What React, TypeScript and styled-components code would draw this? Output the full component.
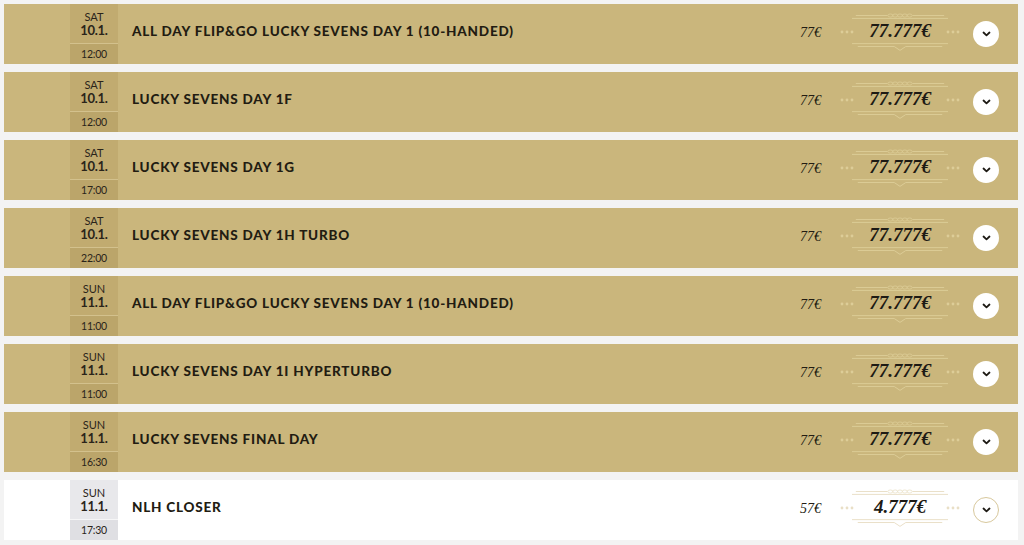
import { FC } from 'react';
import styled, { createGlobalStyle } from 'styled-components';

interface Tournament {
  day: string;
  date: string;
  time: string;
  title: string;
  buyIn: string;
  prize: string;
  featured: boolean;
}

const tournaments: Tournament[] = [
  { day: 'SAT', date: '10.1.', time: '12:00', title: 'ALL DAY FLIP&GO LUCKY SEVENS DAY 1 (10-HANDED)', buyIn: '77€', prize: '77.777€', featured: true },
  { day: 'SAT', date: '10.1.', time: '12:00', title: 'LUCKY SEVENS DAY 1F', buyIn: '77€', prize: '77.777€', featured: true },
  { day: 'SAT', date: '10.1.', time: '17:00', title: 'LUCKY SEVENS DAY 1G', buyIn: '77€', prize: '77.777€', featured: true },
  { day: 'SAT', date: '10.1.', time: '22:00', title: 'LUCKY SEVENS DAY 1H TURBO', buyIn: '77€', prize: '77.777€', featured: true },
  { day: 'SUN', date: '11.1.', time: '11:00', title: 'ALL DAY FLIP&GO LUCKY SEVENS DAY 1 (10-HANDED)', buyIn: '77€', prize: '77.777€', featured: true },
  { day: 'SUN', date: '11.1.', time: '11:00', title: 'LUCKY SEVENS DAY 1I HYPERTURBO', buyIn: '77€', prize: '77.777€', featured: true },
  { day: 'SUN', date: '11.1.', time: '16:30', title: 'LUCKY SEVENS FINAL DAY', buyIn: '77€', prize: '77.777€', featured: true },
  { day: 'SUN', date: '11.1.', time: '17:30', title: 'NLH CLOSER', buyIn: '57€', prize: '4.777€', featured: false },
];

const GlobalStyle = createGlobalStyle`
  html, body {
    margin: 0;
    padding: 0;
    background: #f3f3f3;
  }
  * {
    box-sizing: border-box;
  }
`;

const OrnamentTop: FC<{ color: string }> = ({ color }) => (
  <svg width="100" height="8" viewBox="0 0 100 8">
    <line x1="4" y1="3.5" x2="37" y2="3.5" stroke={color} strokeWidth="1" />
    <line x1="63" y1="3.5" x2="96" y2="3.5" stroke={color} strokeWidth="1" />
    <line x1="0" y1="6.5" x2="100" y2="6.5" stroke={color} strokeWidth="1" />
    {[40, 45, 50, 55, 60].map((cx) => (
      <ellipse key={cx} cx={cx} cy="3.5" rx="2.6" ry="1.6" fill="none" stroke={color} strokeWidth="0.8" />
    ))}
  </svg>
);

const OrnamentBottom: FC<{ color: string }> = ({ color }) => (
  <svg width="100" height="10" viewBox="0 0 100 10">
    <line x1="0" y1="1.5" x2="100" y2="1.5" stroke={color} strokeWidth="1" />
    <line x1="6" y1="4.5" x2="44" y2="4.5" stroke={color} strokeWidth="1" />
    <line x1="56" y1="4.5" x2="94" y2="4.5" stroke={color} strokeWidth="1" />
    <polyline points="44,4.5 50,8.5 56,4.5" fill="none" stroke={color} strokeWidth="1" />
  </svg>
);

const Dots: FC<{ color: string }> = ({ color }) => (
  <svg width="14" height="4" viewBox="0 0 14 4">
    {[2, 7, 12].map((cx) => (
      <circle key={cx} cx={cx} cy="2" r="1.4" fill={color} />
    ))}
  </svg>
);

const Chevron: FC = () => (
  <svg width="9" height="6" viewBox="0 0 9 6">
    <polyline points="1.5,1.5 4.5,4.3 7.5,1.5" fill="none" stroke="#1d1a14" strokeWidth="1.8" strokeLinecap="round" strokeLinejoin="round" />
  </svg>
);

const App: FC = () => (
  <>
    <GlobalStyle />
    <ListStyled>
      {tournaments.map((t, i) => {
        const ornament = t.featured ? '#ddcd98' : '#e9dfc6';
        return (
          <RowStyled key={i} $featured={t.featured}>
            <DateStyled $featured={t.featured}>
              <DateTopStyled $featured={t.featured}>
                <span className="day">{t.day}</span>
                <span className="date">{t.date}</span>
              </DateTopStyled>
              <TimeStyled $featured={t.featured}>{t.time}</TimeStyled>
            </DateStyled>

            <TitleStyled>{t.title}</TitleStyled>

            <BuyInStyled>{t.buyIn}</BuyInStyled>

            <PrizeStyled>
              <Dots color={ornament} />
              <PrizeFrameStyled>
                <OrnamentTop color={ornament} />
                <span className="amount">{t.prize}</span>
                <OrnamentBottom color={ornament} />
              </PrizeFrameStyled>
              <Dots color={ornament} />
            </PrizeStyled>

            <ToggleStyled $featured={t.featured}>
              <Chevron />
            </ToggleStyled>
          </RowStyled>
        );
      })}
    </ListStyled>
  </>
);

const ListStyled = styled.div`
  display: flex;
  flex-direction: column;
  gap: 8px;
  padding: 4px 6px 0 4px;
`;

const RowStyled = styled.div<{ $featured: boolean }>`
  display: flex;
  align-items: center;
  height: 60px;
  padding: 0 19px 0 66px;
  background: ${(p) => (p.$featured ? '#cab67c' : '#ffffff')};
`;

const DateStyled = styled.div<{ $featured: boolean }>`
  display: flex;
  flex-direction: column;
  width: 48px;
  height: 60px;
  flex-shrink: 0;
  font-family: 'Lato', sans-serif;
  color: #2a241a;
  gap: 1px;
  background: ${(p) => (p.$featured ? '#d3c18d' : '#f6f6f7')};
`;

const DateTopStyled = styled.div<{ $featured: boolean }>`
  display: flex;
  flex-direction: column;
  align-items: center;
  justify-content: center;
  height: 39px;
  padding-top: 1px;
  background: ${(p) => (p.$featured ? '#c1ab70' : '#e8e8eb')};

  & .day {
    font-size: 11px;
    line-height: 12px;
    font-weight: 400;
  }

  & .date {
    font-size: 13px;
    line-height: 14px;
    font-weight: 700;
    letter-spacing: -0.3px;
  }
`;

const TimeStyled = styled.div<{ $featured: boolean }>`
  display: flex;
  align-items: center;
  justify-content: center;
  flex: 1;
  font-size: 10.5px;
  letter-spacing: -0.2px;
  background: ${(p) => (p.$featured ? '#bba56a' : '#dfdfe3')};
`;

const TitleStyled = styled.div`
  flex: 1;
  margin-left: 14px;
  padding-bottom: 6px;
  font-family: 'Lato', sans-serif;
  font-weight: 900;
  font-size: 13.5px;
  letter-spacing: 0.8px;
  color: #221c12;
  white-space: nowrap;
`;

const BuyInStyled = styled.div`
  font-family: 'Liberation Serif', serif;
  font-style: italic;
  font-size: 14px;
  color: #221c12;
  margin-right: 19px;
  padding-bottom: 3px;
`;

const PrizeStyled = styled.div`
  display: flex;
  align-items: center;
  margin-bottom: 4px;
`;

const PrizeFrameStyled = styled.div`
  display: flex;
  flex-direction: column;
  align-items: center;
  width: 96px;
  margin: 0 -2px;

  & svg {
    width: 96px;
  }

  & .amount {
    font-family: 'Liberation Serif', serif;
    font-style: italic;
    font-weight: 700;
    font-size: 19px;
    line-height: 22px;
    color: #1d1a14;
  }
`;

const ToggleStyled = styled.button<{ $featured: boolean }>`
  display: flex;
  align-items: center;
  justify-content: center;
  width: 26px;
  height: 26px;
  margin-left: 13px;
  padding: 0;
  border-radius: 50%;
  background: #ffffff;
  border: ${(p) => (p.$featured ? 'none' : '1.5px solid #d8c89c')};
  cursor: pointer;
`;

export default App;
